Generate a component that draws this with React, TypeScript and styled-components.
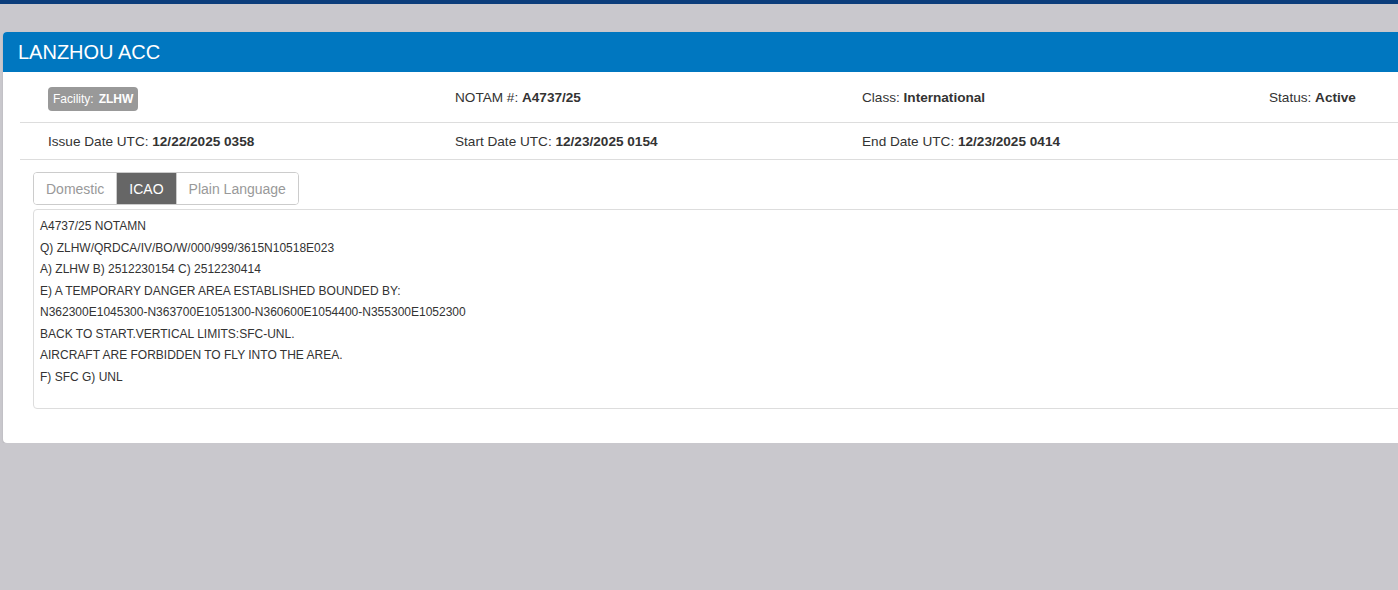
import styled, { createGlobalStyle } from 'styled-components';

const GlobalStyle = createGlobalStyle`
  html, body {
    margin: 0;
    padding: 0;
    background: #c9c8cd;
    overflow: hidden;
    font-family: "Liberation Sans", Arial, sans-serif;
    color: #333;
  }
`;

const TopStrip = styled.div`
  height: 4px;
  background: #0b3d7b;
`;

const Page = styled.div`
  padding: 28px 0 0 3px;
  width: 1440px;
`;

const Panel = styled.section`
  background: #fff;
  border-radius: 4px;
  box-shadow: 0 1px 2px rgba(0, 0, 0, 0.12);
  padding-bottom: 34px;
`;

const Header = styled.header`
  height: 40px;
  background: #0077c0;
  border-radius: 4px 4px 0 0;
  display: flex;
  align-items: center;
  padding-left: 15px;
`;

const Title = styled.h1`
  margin: 0;
  font-size: 20px;
  font-weight: normal;
  color: #fff;
`;

const InfoRow = styled.div<{ $height: number }>`
  margin-left: 17px;
  height: ${(p) => p.$height}px;
  border-bottom: 1px solid #ddd;
  display: flex;
  align-items: center;
`;

const Cell = styled.div`
  flex: 0 0 407px;
  padding-left: 28px;
  box-sizing: border-box;
  font-size: 13.6px;
  color: #333;
  white-space: nowrap;
`;

const Value = styled.b`
  font-weight: bold;
`;

const Badge = styled.span`
  display: inline-flex;
  align-items: center;
  height: 24px;
  padding: 0 5px;
  gap: 5px;
  background: #999;
  border-radius: 4px;
  color: #fff;
  font-size: 12px;
  margin-top: 3px;
`;

const Body = styled.div`
  padding: 12px 0 0 30px;
`;

const Tabs = styled.div`
  display: inline-flex;
  border: 1px solid #ccc;
  border-radius: 4px;
  overflow: hidden;
  height: 33px;
  box-sizing: border-box;
`;

const Tab = styled.button<{ $active?: boolean }>`
  border: none;
  border-left: 1px solid #ccc;
  &:first-child {
    border-left: none;
  }
  background: ${(p) => (p.$active ? '#666' : '#fff')};
  color: ${(p) => (p.$active ? '#fff' : '#999')};
  font-family: "Liberation Sans", Arial, sans-serif;
  font-size: 14px;
  padding: 0 12px;
  cursor: pointer;
`;

const NotamBox = styled.div`
  margin-top: 4px;
  border: 1px solid #ddd;
  border-radius: 4px;
  padding: 6px 6px 19px;
  font-size: 12px;
  line-height: 21.5px;
  color: #333;
  height: 200px;
  box-sizing: border-box;
`;

const Line = styled.div`
  white-space: pre;
`;

const notamLines = [
  'A4737/25 NOTAMN',
  'Q) ZLHW/QRDCA/IV/BO/W/000/999/3615N10518E023',
  'A) ZLHW B) 2512230154 C) 2512230414',
  'E) A TEMPORARY DANGER AREA ESTABLISHED BOUNDED BY:',
  'N362300E1045300-N363700E1051300-N360600E1054400-N355300E1052300',
  'BACK TO START.VERTICAL LIMITS:SFC-UNL.',
  'AIRCRAFT ARE FORBIDDEN TO FLY INTO THE AREA.',
  'F) SFC G) UNL',
];

export default function App() {
  return (
    <>
      <GlobalStyle />
      <TopStrip />
      <Page>
        <Panel>
          <Header>
            <Title>LANZHOU ACC</Title>
          </Header>
          <InfoRow $height={50}>
            <Cell>
              <Badge>
                Facility: <Value>ZLHW</Value>
              </Badge>
            </Cell>
            <Cell>
              NOTAM #: <Value>A4737/25</Value>
            </Cell>
            <Cell>
              Class: <Value>International</Value>
            </Cell>
            <Cell>
              Status: <Value>Active</Value>
            </Cell>
          </InfoRow>
          <InfoRow $height={36}>
            <Cell>
              Issue Date UTC: <Value>12/22/2025 0358</Value>
            </Cell>
            <Cell>
              Start Date UTC: <Value>12/23/2025 0154</Value>
            </Cell>
            <Cell>
              End Date UTC: <Value>12/23/2025 0414</Value>
            </Cell>
          </InfoRow>
          <Body>
            <Tabs>
              <Tab>Domestic</Tab>
              <Tab $active>ICAO</Tab>
              <Tab>Plain Language</Tab>
            </Tabs>
            <NotamBox>
              {notamLines.map((l) => (
                <Line key={l}>{l}</Line>
              ))}
            </NotamBox>
          </Body>
        </Panel>
      </Page>
    </>
  );
}
